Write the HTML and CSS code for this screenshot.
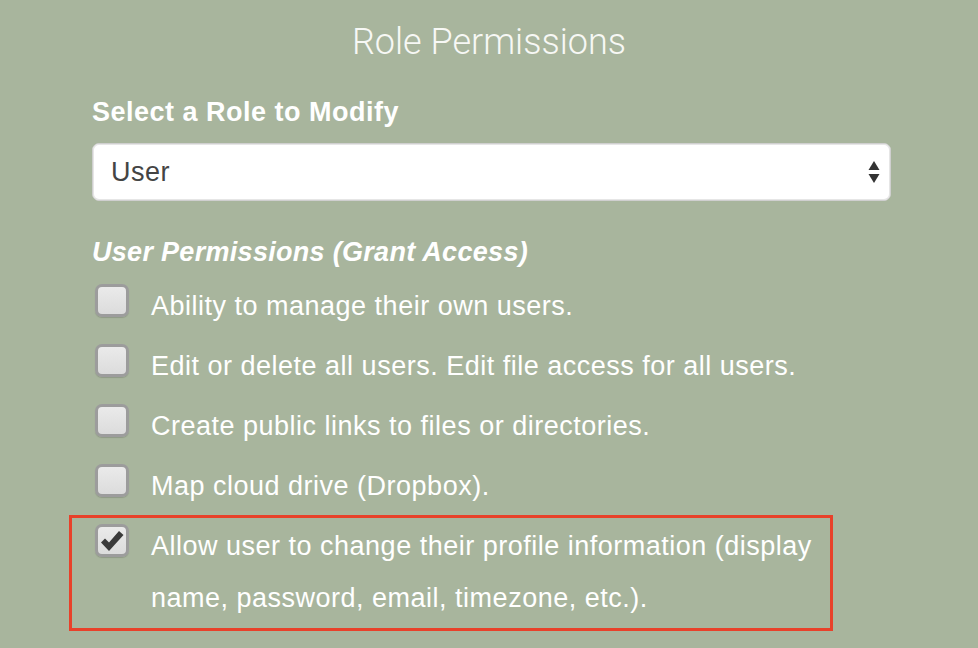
FILE: index.html
```html
<!DOCTYPE html>
<html>
<head>
<meta charset="utf-8">
<link rel="stylesheet" href="styles.css">
</head>
<body>
<div class="page">
  <h1 class="title">Role Permissions</h1>
  <div class="form">
    <label class="field-label">Select a Role to Modify</label>
    <div class="select">
      <span class="select-value">User</span>
      <svg class="select-arrows" width="12" height="24" viewBox="0 0 12 24">
        <path d="M6 1 L11.5 10 H0.5 Z" fill="#333"/>
        <path d="M0.5 14 H11.5 L6 23 Z" fill="#333"/>
      </svg>
    </div>
    <h2 class="section">User Permissions (Grant Access)</h2>
    <ul class="perms">
      <li class="perm"><span class="box"></span><span class="perm-text">Ability to manage their own users.</span></li>
      <li class="perm"><span class="box"></span><span class="perm-text">Edit or delete all users. Edit file access for all users.</span></li>
      <li class="perm"><span class="box"></span><span class="perm-text">Create public links to files or directories.</span></li>
      <li class="perm"><span class="box"></span><span class="perm-text">Map cloud drive (Dropbox).</span></li>
      <li class="perm highlight"><span class="box checked"><svg class="check" width="24" height="22" viewBox="0 0 24 22"><path d="M1 12.5 L5 8.5 L9 12.5 L19 1 L23.5 5 L9 21 Z" fill="#3a3a3a"/></svg></span><span class="perm-text">Allow user to change their profile information (display name, password, email, timezone, etc.).</span></li>
    </ul>
  </div>
</div>
</body>
</html>
```
FILE: styles.css
```css
html, body {
  margin: 0;
  padding: 0;
}
body {
  background: #a8b59d;
  font-family: "Liberation Sans", Arial, sans-serif;
  color: #ffffff;
  width: 978px;
  height: 648px;
  overflow: hidden;
}
.page {
  padding-top: 20px;
}
.title {
  margin: 0;
  text-align: center;
  font-family: Roboto, "Liberation Sans", sans-serif;
  font-weight: 300;
  font-size: 36px;
  line-height: 44px;
  color: #f7f8f5;
}
.form {
  margin: 0 87px 0 92px;
}
.field-label {
  display: block;
  margin-top: 32px;
  font-weight: bold;
  font-size: 27px;
  letter-spacing: 0.5px;
  line-height: 32px;
}
.select {
  margin-top: 15px;
  height: 58px;
  box-sizing: border-box;
  background: #fff;
  border: 1px solid #cfcfcf;
  box-shadow: inset 0 0 0 1px #e6e6e6;
  border-radius: 7px;
  display: flex;
  align-items: center;
  justify-content: space-between;
  padding: 0 10px 0 18px;
}
.select-value {
  color: #444;
  font-size: 27px;
  letter-spacing: 0.5px;
}
.select-arrows {
  display: block;
}
.section {
  margin: 35px 0 0;
  font-size: 27px;
  font-weight: bold;
  font-style: italic;
  letter-spacing: 0.3px;
  line-height: 32px;
}
.perms {
  list-style: none;
  margin: 12px 0 0;
  padding: 0;
}
.perm {
  display: flex;
  align-items: flex-start;
  margin-bottom: 8px;
  position: relative;
}
.box {
  flex: none;
  width: 34px;
  height: 33px;
  box-sizing: border-box;
  margin: 4px 22px 0 3px;
  border: 3px solid #9c9c9c;
  border-radius: 7px;
  background: linear-gradient(#eaeaea, #dcdcdc);
  box-shadow: 0 1px 1px rgba(0,0,0,0.15);
  display: flex;
  align-items: center;
  justify-content: center;
}
.check {
  display: block;
}
.perm-text {
  font-size: 27px;
  letter-spacing: 0.5px;
  line-height: 52px;
  color: #fff;
}
.highlight::before {
  content: "";
  position: absolute;
  left: -23px;
  top: -5px;
  right: 58px;
  bottom: -7px;
  border: 3px solid #e8412a;
}
.highlight .perm-text {
  max-width: 680px;
}
```
